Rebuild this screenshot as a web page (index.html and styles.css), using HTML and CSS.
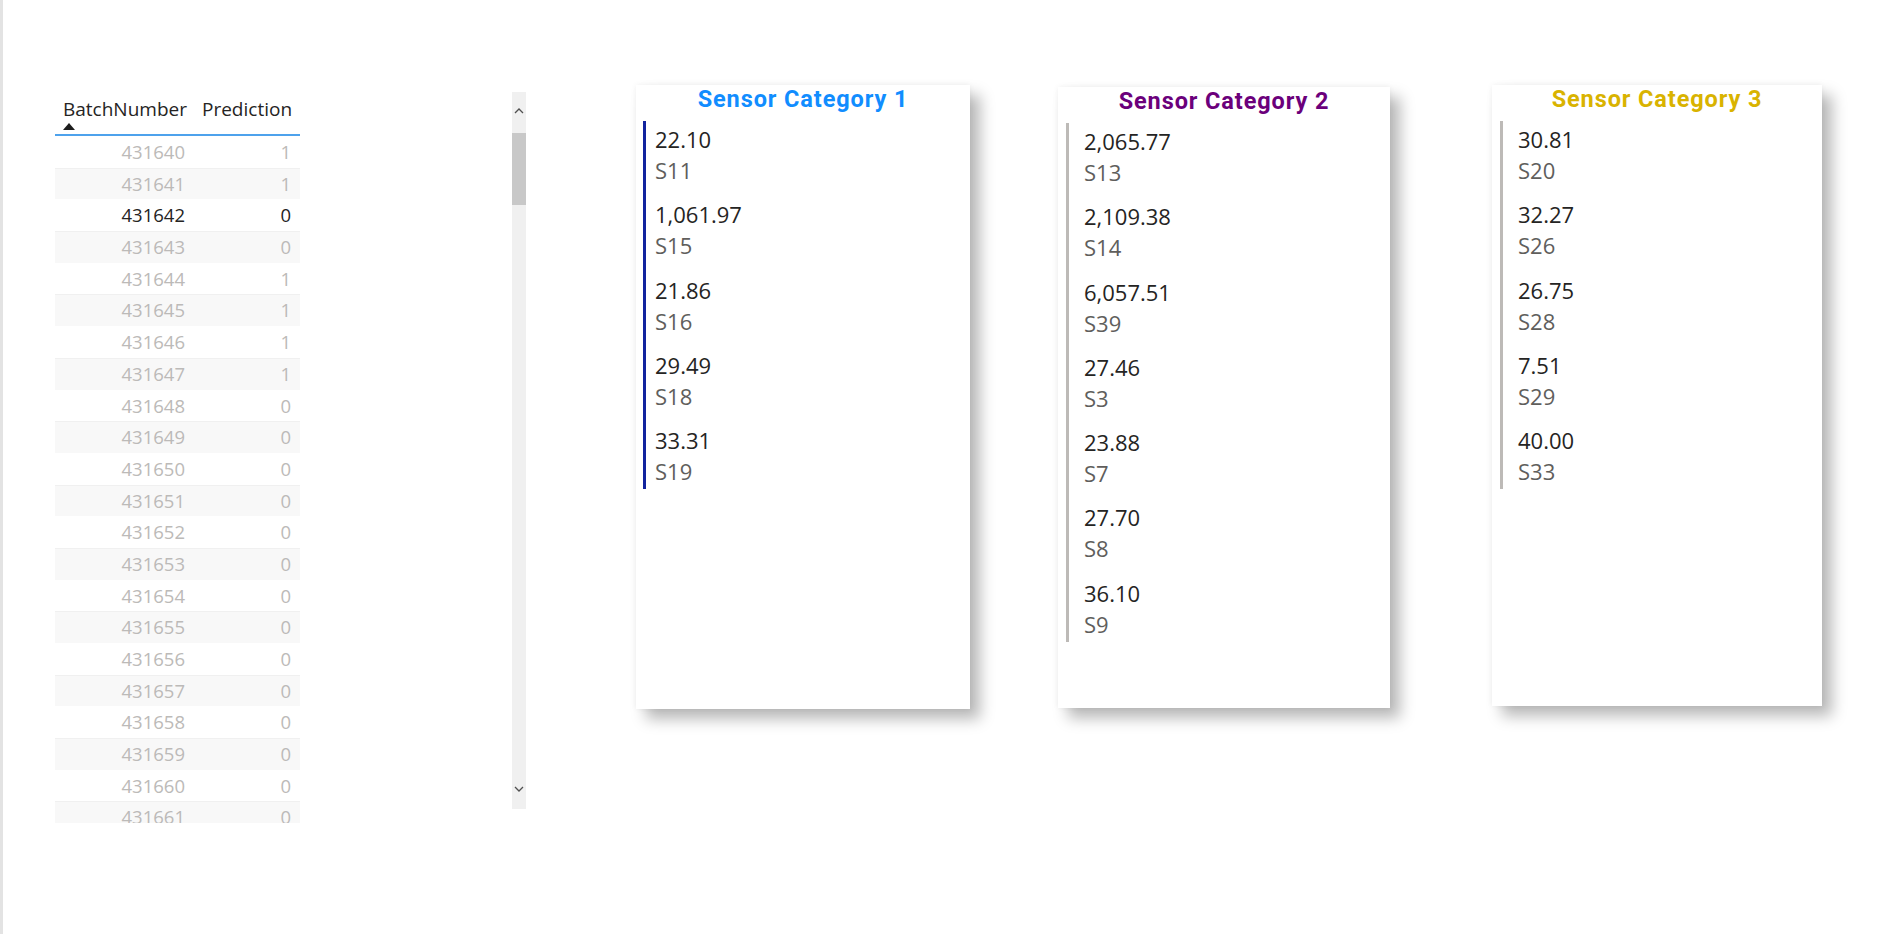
FILE: index.html
```html
<!DOCTYPE html>
<html lang="en">
<head>
<meta charset="utf-8">
<title>Sensor Report</title>
<link rel="stylesheet" href="styles.css">
</head>
<body>
<div class="page">
  <section class="table-visual">
    <div class="thead">
      <div class="th th-batch">
        <span class="th-label">BatchNumber</span>
        <span class="sort-arrow"></span>
      </div>
      <div class="th th-pred"><span class="th-label">Prediction</span></div>
    </div>
    <div class="tbody">
      <div class="tr"><span class="td c1">431640</span><span class="td c2">1</span></div>
      <div class="tr alt"><span class="td c1">431641</span><span class="td c2">1</span></div>
      <div class="tr sel"><span class="td c1">431642</span><span class="td c2">0</span></div>
      <div class="tr alt"><span class="td c1">431643</span><span class="td c2">0</span></div>
      <div class="tr"><span class="td c1">431644</span><span class="td c2">1</span></div>
      <div class="tr alt"><span class="td c1">431645</span><span class="td c2">1</span></div>
      <div class="tr"><span class="td c1">431646</span><span class="td c2">1</span></div>
      <div class="tr alt"><span class="td c1">431647</span><span class="td c2">1</span></div>
      <div class="tr"><span class="td c1">431648</span><span class="td c2">0</span></div>
      <div class="tr alt"><span class="td c1">431649</span><span class="td c2">0</span></div>
      <div class="tr"><span class="td c1">431650</span><span class="td c2">0</span></div>
      <div class="tr alt"><span class="td c1">431651</span><span class="td c2">0</span></div>
      <div class="tr"><span class="td c1">431652</span><span class="td c2">0</span></div>
      <div class="tr alt"><span class="td c1">431653</span><span class="td c2">0</span></div>
      <div class="tr"><span class="td c1">431654</span><span class="td c2">0</span></div>
      <div class="tr alt"><span class="td c1">431655</span><span class="td c2">0</span></div>
      <div class="tr"><span class="td c1">431656</span><span class="td c2">0</span></div>
      <div class="tr alt"><span class="td c1">431657</span><span class="td c2">0</span></div>
      <div class="tr"><span class="td c1">431658</span><span class="td c2">0</span></div>
      <div class="tr alt"><span class="td c1">431659</span><span class="td c2">0</span></div>
      <div class="tr"><span class="td c1">431660</span><span class="td c2">0</span></div>
      <div class="tr alt"><span class="td c1">431661</span><span class="td c2">0</span></div>
    </div>
  </section>

  <div class="scrollbar">
    <svg class="chev chev-up" width="14" height="14" viewBox="0 0 14 14"><polyline points="3,9 7,5 11,9" fill="none" stroke="#505050" stroke-width="1.3"/></svg>
    <div class="thumb"></div>
    <div class="track-fill"></div>
    <svg class="chev chev-down" width="14" height="14" viewBox="0 0 14 14"><polyline points="3,5 7,9 11,5" fill="none" stroke="#505050" stroke-width="1.3"/></svg>
  </div>

  <section class="card card-1">
    <h2 class="card-title">Sensor Category 1</h2>
    <div class="card-list">
      <div class="item"><div class="val">22.10</div><div class="lbl">S11</div></div>
      <div class="item"><div class="val">1,061.97</div><div class="lbl">S15</div></div>
      <div class="item"><div class="val">21.86</div><div class="lbl">S16</div></div>
      <div class="item"><div class="val">29.49</div><div class="lbl">S18</div></div>
      <div class="item"><div class="val">33.31</div><div class="lbl">S19</div></div>
    </div>
  </section>

  <section class="card card-2">
    <h2 class="card-title">Sensor Category 2</h2>
    <div class="card-list">
      <div class="item"><div class="val">2,065.77</div><div class="lbl">S13</div></div>
      <div class="item"><div class="val">2,109.38</div><div class="lbl">S14</div></div>
      <div class="item"><div class="val">6,057.51</div><div class="lbl">S39</div></div>
      <div class="item"><div class="val">27.46</div><div class="lbl">S3</div></div>
      <div class="item"><div class="val">23.88</div><div class="lbl">S7</div></div>
      <div class="item"><div class="val">27.70</div><div class="lbl">S8</div></div>
      <div class="item"><div class="val">36.10</div><div class="lbl">S9</div></div>
    </div>
  </section>

  <section class="card card-3">
    <h2 class="card-title">Sensor Category 3</h2>
    <div class="card-list">
      <div class="item"><div class="val">30.81</div><div class="lbl">S20</div></div>
      <div class="item"><div class="val">32.27</div><div class="lbl">S26</div></div>
      <div class="item"><div class="val">26.75</div><div class="lbl">S28</div></div>
      <div class="item"><div class="val">7.51</div><div class="lbl">S29</div></div>
      <div class="item"><div class="val">40.00</div><div class="lbl">S33</div></div>
    </div>
  </section>
</div>
</body>
</html>
```

FILE: styles.css
```css
html, body {
  margin: 0;
  padding: 0;
  background: #ffffff;
}
body {
  width: 1882px;
  height: 934px;
  overflow: hidden;
  box-sizing: border-box;
  border-left: 3px solid #e3e3e3;
  font-family: "Open Sans", "Noto Sans", sans-serif;
}
.page {
  display: flex;
  align-items: flex-start;
}

/* ---------- table ---------- */
.table-visual {
  margin-left: 52px;
  margin-top: 97px;
  width: 245px;
  height: 726px;
  overflow: hidden;
  flex: none;
}
.thead {
  display: flex;
  border-bottom: 2px solid #4ea2ec;
}
.th {
  box-sizing: border-box;
  padding: 0 8px 4px;
  color: #252423;
  font-size: 19px;
  line-height: 24px;
}
.th-batch { width: 139px; }
.th-pred { width: 106px; }
.th-label { display: block; white-space: nowrap; }
.sort-arrow {
  display: block;
  margin-top: 2px;
  width: 0;
  height: 0;
  border-left: 6.5px solid transparent;
  border-right: 6.5px solid transparent;
  border-bottom: 7px solid #1d1d1d;
}
.tr {
  display: flex;
  height: 31.7px;
  box-sizing: border-box;
  color: #bcbab8;
  font-size: 18.5px;
  line-height: 31.7px;
}
.tr.alt {
  background: #f8f8f8;
  border-top: 1px solid #f0f0f0;
  line-height: 30.7px;
}
.tr.sel { color: #252423; }
.td {
  box-sizing: border-box;
  text-align: right;
  padding-right: 9px;
}
.c1 { width: 139px; }
.c2 { width: 106px; }

/* ---------- scrollbar ---------- */
.scrollbar {
  flex: none;
  margin-left: 212px;
  margin-top: 92px;
  width: 14px;
  height: 717px;
  background: #f0f0f0;
  display: flex;
  flex-direction: column;
  align-items: center;
}
.chev {
  display: block;
  flex: none;
}
.chev-up { margin: 12px 0 15px; }
.chev-down { margin: 0 0 13px; }
.thumb {
  flex: none;
  width: 14px;
  height: 72px;
  background: #c8c8c8;
}
.track-fill { flex: 1; }

/* ---------- cards ---------- */
.card {
  flex: none;
  box-sizing: border-box;
  background: #ffffff;
  box-shadow: 10px 10px 14px rgba(0, 0, 0, 0.28), 0 0 6px rgba(0, 0, 0, 0.06);
}
.card-1 { margin-left: 110px; margin-top: 85px; width: 334px; height: 624px; }
.card-2 { margin-left: 88px; margin-top: 87px; width: 332px; height: 621px; }
.card-3 { margin-left: 102px; margin-top: 85px; width: 330px; height: 621px; }

.card-title {
  margin: 0;
  padding-top: 1px;
  text-align: center;
  font-family: "Roboto", "Liberation Sans", sans-serif;
  font-weight: 700;
  font-size: 23.5px;
  letter-spacing: 0.9px;
  line-height: 27px;
  white-space: nowrap;
}
.card-1 .card-title { color: #118dff; }
.card-2 .card-title { color: #6b007b; }
.card-3 .card-title { color: #d9b300; }

.card-list {
  margin-top: 8px;
  margin-left: 8px;
  padding: 3px 0 2px 15px;
  border-left: 3px solid #bdbab7;
  display: flex;
  flex-direction: column;
  gap: 13.3px;
}
.card-1 .card-list {
  margin-left: 7px;
  padding-left: 9px;
  border-left-color: #12239e;
}
.val {
  font-size: 22px;
  line-height: 31px;
  color: #252423;
}
.lbl {
  font-size: 22px;
  line-height: 31px;
  color: #605e5c;
}
```
